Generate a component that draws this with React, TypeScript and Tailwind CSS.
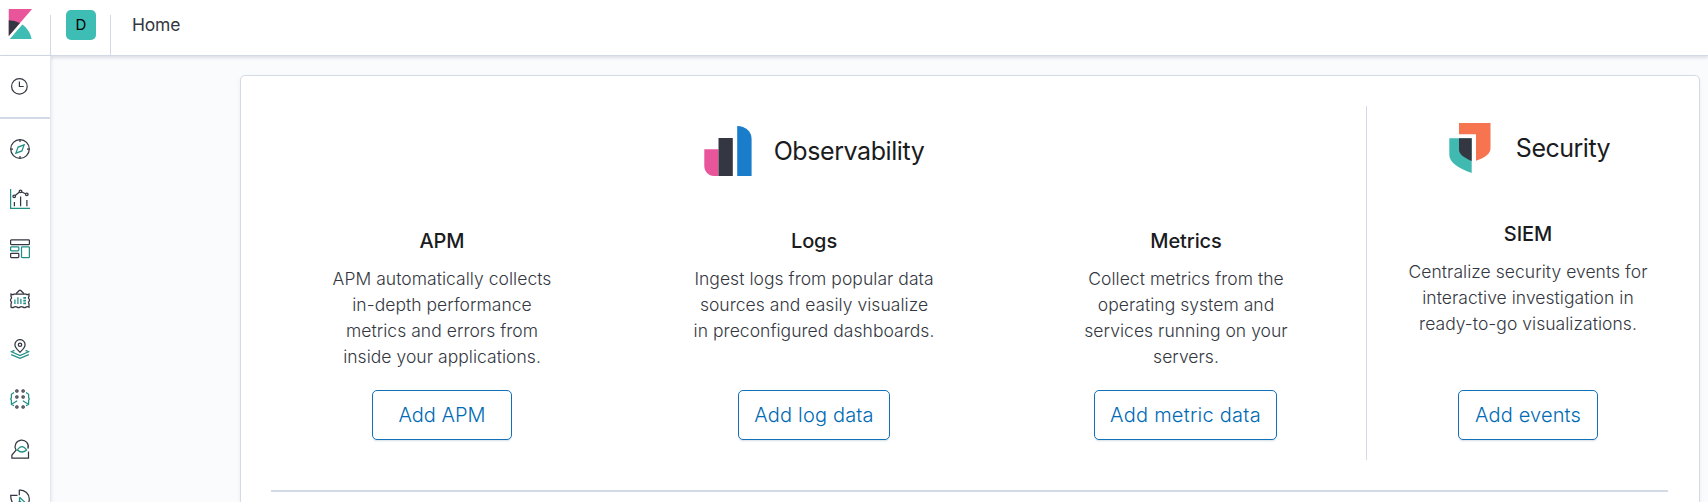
import type { ReactNode } from "react";

const DARK = "#343741";
const TEAL = "#208f85";

function AppIcon({ children }: { children: ReactNode }) {
  return (
    <svg width="20" height="20" viewBox="0 0 20 20" fill="none" stroke={DARK} strokeWidth="1.25" className="shrink-0">
      {children}
    </svg>
  );
}

const navIcons: { name: string; icon: ReactNode }[] = [
  {
    name: "Discover",
    icon: (
      <AppIcon>
        <circle cx="10" cy="10" r="9.3" />
        <path d="M10 .7V3M10 17v2.300M.7 10H3M17 10h2.300" />
        <path stroke={TEAL} d="M5.900 14.100l2.200-6 6-2.200-2.200 6z" />
      </AppIcon>
    ),
  },
  {
    name: "Visualize",
    icon: (
      <AppIcon>
        <path stroke={TEAL} d="M.6 0v19.400H20" />
        <path d="M4.400 13v4.200M10.600 7.500v9.700M16.900 11v6.200M5.200 6.500l4-3.300M11.800 3l3.700 1.800" />
        <circle cx="4.200" cy="7.300" r="1.300" />
        <circle cx="10.500" cy="2.300" r="1.300" />
        <circle cx="16.800" cy="5.300" r="1.300" />
      </AppIcon>
    ),
  },
  {
    name: "Dashboard",
    icon: (
      <AppIcon>
        <rect x=".6" y=".9" width="18.800" height="4.700" rx="0.8" />
        <rect x=".6" y="7.900" width="8.200" height="4" rx="0.800" stroke={TEAL} />
        <rect x="11.500" y="7.900" width="7.900" height="10.700" rx="0.800" stroke={TEAL} />
        <rect x=".6" y="14.400" width="8.200" height="4.200" rx="0.800" />
      </AppIcon>
    ),
  },
  {
    name: "Canvas",
    icon: (
      <AppIcon>
        <path d="M6 4.800L9.200 1.500q.8-.7 1.600 0L14 4.800" />
        <path d="M1 5.100q1.500.9 3 0h12q1.500.9 3 0v2.400q-1.100 1.200 0 2.400t0 2.400 0 2.400v3.400q-1.500-.9-3 0t-3 0-3 0-3 0-3 0-3 0v-3.400q1.100-1.200 0-2.400t0-2.400 0-2.400z" />
        <path stroke={TEAL} d="M4.900 10.500v4.600M7.900 8.200v6.900M10.900 9.800v5.300" />
        <path stroke={TEAL} strokeWidth="1.700" d="M13.300 8.900H16M13.300 11.700H16M13.300 14.400H16" />
      </AppIcon>
    ),
  },
  {
    name: "Maps",
    icon: (
      <AppIcon>
        <path d="M10 13.200C7 10.300 4.900 8.600 4.900 5.700a5.100 5.100 0 0110.200 0c0 2.900-2.100 4.600-5.100 7.500z" />
        <circle cx="10" cy="5.700" r="1.700" />
        <path stroke={TEAL} d="M4.500 11.400l-3 1.400L10 16.600l8.500-3.800-3-1.400M1.200 15.600l8.800 3.700 8.800-3.700" />
      </AppIcon>
    ),
  },
  {
    name: "Machine Learning",
    icon: (
      <AppIcon>
        <g fill="#a0a2a8" strokeWidth="1.050">
          <circle cx="6.900" cy="1.900" r="1.250" />
          <circle cx="13.100" cy="1.900" r="1.250" />
          <circle cx="6.900" cy="8" r="1.250" />
          <circle cx="13.100" cy="8" r="1.250" />
          <circle cx="6.900" cy="18" r="1.250" />
          <circle cx="13.100" cy="18" r="1.250" />
        </g>
        <path stroke={TEAL} d="M4 3.500L1.400 5.300v3.200L.7 10l.7 1.500v3.800L4 16.800M1.600 15.200L7.200 11.800M16 3.500l2.600 1.800v3.200l.7 1.500-.7 1.500v3.800L16 16.800M18.400 15.200l-5.600-3.400" />
      </AppIcon>
    ),
  },
  {
    name: "Metrics",
    icon: (
      <AppIcon>
        <path d="M5.900 10.800A6.600 6.600 0 1118 9.600" />
        <path d="M6.500 10.600L1.900 16v3.200h16.600V12.500" />
        <path stroke={TEAL} d="M7.300 11q4.600-7 9.300 0-4.700 4-9.300 0z" />
      </AppIcon>
    ),
  },
  {
    name: "APM",
    icon: (
      <AppIcon>
        <path d="M9.300 1v5.300M9.300.8c5.800 0 10 4.300 10 9.300 0 2.400-.8 4.500-2.300 6.200" />
        <path d="M7.500 6.400H.7c0 6 3 10.500 8.600 12.500V12" />
        <path stroke={TEAL} d="M9.500 8.200v3.500l6.500 6.500M9.500 8.200l8 7.500" />
      </AppIcon>
    ),
  },
];

function KibanaLogo() {
  return (
    <svg width="30" height="30" viewBox="0 0 32 32" className="ml-[5px] mt-[9px] block">
      <path fill="#e8559b" d="M4 0v28.789L28.935.017z" />
      <path fill={DARK} d="M4 12v16.789l11.906-13.738A24.721 24.721 0 004 12" />
      <path fill="#3dbdb3" d="M18.479 16.664L6.268 30.754l-1.073 1.237h23.191c-1.252-6.292-4.883-11.719-9.908-15.327" />
    </svg>
  );
}

function ObservabilityLogo() {
  return (
    <svg width="48" height="50" viewBox="0 0 48 50" className="block">
      <path fill="#e8559b" d="M.3 23.300H14.500V50H10C4.500 50 .3 45.500 .3 40z" />
      <path fill={DARK} d="M14.500 12H28.800V50H14.500z" />
      <path fill="#1a7dcb" d="M33.200 0C41.500 0 47.600 5.500 47.600 13V50H33.200z" />
    </svg>
  );
}

function SecurityLogo() {
  return (
    <svg width="42" height="50" viewBox="0 0 42 50" className="block">
      <path fill="#f6744f" d="M10 0H41.500V25.500C41.500 30.500 36.500 34.500 27 37.800V11.300H10z" />
      <path fill="#40b9b0" d="M.3 15.300H22.700V50C9.500 45.500.3 39.500.3 31.500z" />
      <path fill={DARK} d="M10 15.300H22.700V38C14.500 34.500 10 31 10 26.500z" />
    </svg>
  );
}

function Card({ title, lines, action, buttonClass }: { title: string; lines: string[]; action: string; buttonClass: string }) {
  return (
    <div className="flex min-w-0 flex-1 flex-col items-center text-center">
      <h3 className="text-[20px] font-medium leading-[30px] tracking-[-0.1px] text-[#1a1c21]">{title}</h3>
      <p className="mt-[10px] whitespace-nowrap text-[17.5px] font-[340] leading-[26px] tracking-[0.04px] text-[#343741]">
        {lines.map((line) => (
          <span key={line} className="block">
            {line}
          </span>
        ))}
      </p>
      <button
        className={`mt-auto h-[50px] shrink-0 whitespace-nowrap rounded-[5px] border border-[#1270b6] bg-white text-[20px] font-light leading-[48px] text-[#006bb4] shadow-[0_2px_2px_-1px_rgba(54,97,126,0.2)] ${buttonClass}`}
      >
        {action}
      </button>
    </div>
  );
}

export default function App() {
  return (
    <div className="flex h-[502px] w-full flex-col overflow-hidden bg-[#fafbfd] font-['Inter',sans-serif]">
      <header className="relative z-10 flex h-14 shrink-0 border-b border-[#d3dae6] bg-white shadow-[0_2px_3px_rgba(152,162,179,0.3)]">
        <div className="w-[50px]">
          <KibanaLogo />
        </div>
        <div className="mt-[15px] flex w-[61px] border-x border-[#d3dae6]">
          <div className="-mt-[5px] ml-[15px] flex h-[30px] w-[30px] items-center justify-center rounded-[5px] bg-[#3dbdb3] text-[15px] text-black">
            D
          </div>
        </div>
        <div className="ml-[21px] mt-[12px] text-[17.5px] leading-[26px] tracking-[-0.2px] text-[#343741]">Home</div>
      </header>

      <div className="flex min-h-0 flex-1">
        <nav className="relative z-20 flex w-[51px] shrink-0 flex-col border-r border-[#e3e8f0] bg-white shadow-[1px_0_3px_rgba(152,162,179,0.2)]">
          <div className="flex h-[61px] shrink-0 pl-[11px] pt-[22px]">
            <svg width="17" height="17" viewBox="0 0 17 17" fill="none" stroke={DARK} strokeWidth="1.200">
              <circle cx="8.400" cy="8.400" r="7.800" />
              <path d="M8.400 3.500v5h4.300" />
            </svg>
          </div>
          <div className="h-[2px] w-[50px] shrink-0 bg-[#d3dae6]" />
          <div className="flex flex-col gap-[30px] pl-[10px] pt-5">
            {navIcons.map((item) => (
              <div key={item.name} className="h-5">
                {item.icon}
              </div>
            ))}
          </div>
        </nav>

        <main className="flex min-w-0 flex-1 pl-[189px] pr-2 pt-[19px]">
          <div className="flex h-[600px] flex-1 flex-col rounded-[5px] border border-[#d3dae6] bg-white px-[30px] pt-[30px] shadow-[0_2px_4px_rgba(152,162,179,0.15)]">
            <div className="flex h-[354px] shrink-0">
              <section className="flex w-[1086px] shrink-0 flex-col">
                <div className="mt-[20px] flex items-center justify-center gap-[22px]">
                  <ObservabilityLogo />
                  <h2 className="text-[25px] leading-[38px] tracking-[-0.42px] text-[#1a1c21]">Observability</h2>
                </div>
                <div className="mt-[50px] flex h-[214px] gap-[30px]">
                  <Card
                    title="APM"
                    lines={["APM automatically collects", "in-depth performance", "metrics and errors from", "inside your applications."]}
                    action="Add APM"
                    buttonClass="w-[140px]"
                  />
                  <Card
                    title="Logs"
                    lines={["Ingest logs from popular data", "sources and easily visualize", "in preconfigured dashboards."]}
                    action="Add log data"
                    buttonClass="w-[152px] tracking-[0.17px]"
                  />
                  <Card
                    title="Metrics"
                    lines={["Collect metrics from the", "operating system and", "services running on your", "servers."]}
                    action="Add metric data"
                    buttonClass="mr-px w-[183px] tracking-[0.25px]"
                  />
                </div>
              </section>
              <section className="ml-[9px] flex flex-1 flex-col border-l border-[#d3dae6] pl-[20px]">
                <div className="mt-[17px] flex items-center justify-center gap-[25px] pl-[3px]">
                  <SecurityLogo />
                  <h2 className="text-[25px] leading-[38px] tracking-[-0.5px] text-[#1a1c21]">Security</h2>
                </div>
                <div className="mt-[46px] flex h-[221px]">
                  <Card
                    title="SIEM"
                    lines={["Centralize security events for", "interactive investigation in", "ready-to-go visualizations."]}
                    action="Add events"
                    buttonClass="w-[140px] tracking-[0.15px]"
                  />
                </div>
              </section>
            </div>
            <div className="mr-px mt-[30px] h-[2px] shrink-0 bg-[#d3dae6]" />
          </div>
        </main>
      </div>
    </div>
  );
}
